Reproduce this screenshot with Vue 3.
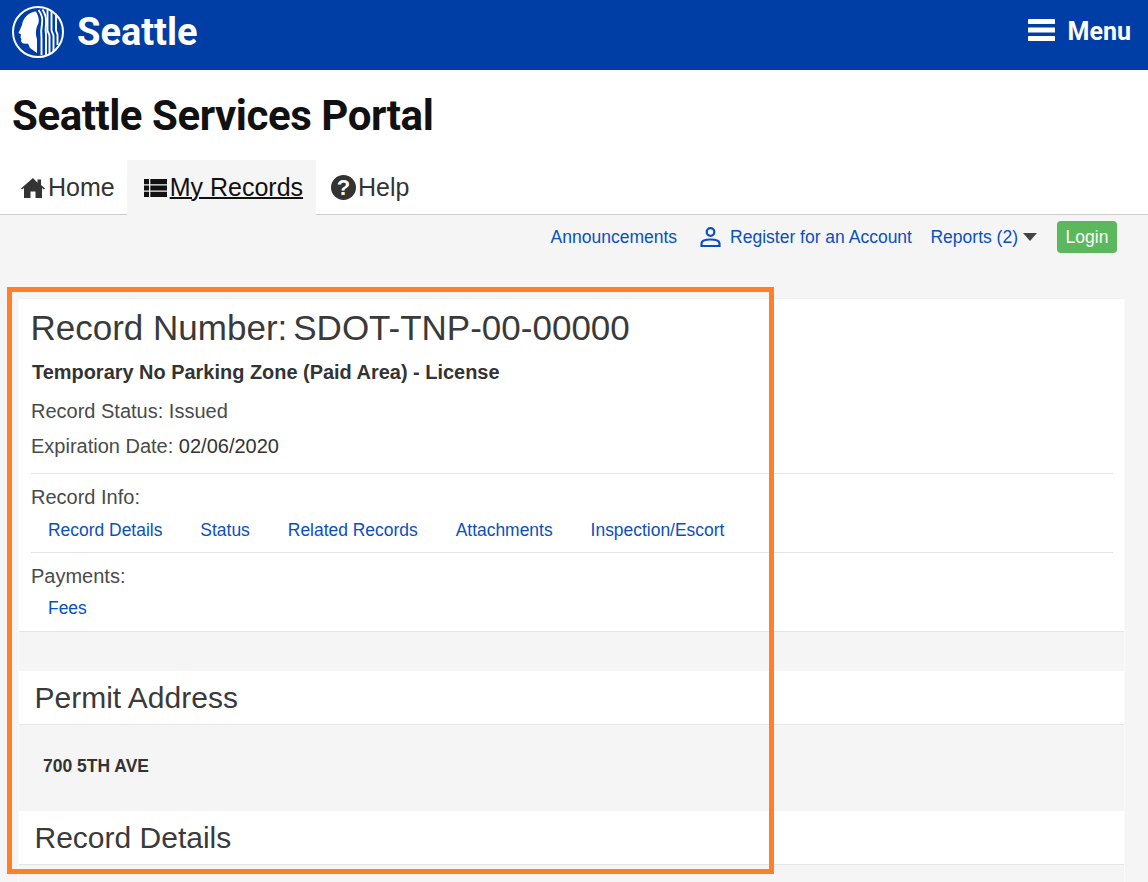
<template>
  <div class="page">
    <header class="topbar">
      <a class="brand">
        <svg class="seal" viewBox="0 0 52 52" width="52" height="52">
          <circle cx="26" cy="26" r="25" fill="none" stroke="#fff" stroke-width="2" />
          <path
            fill="#fff"
            d="M23 5.500C16 7 11 12 10 19L6.500 27l2.500 1.500-.5 3 1 1.500-.5 2c1 3 4 3 7 2.500l2 4.500 7 5V33c-2-6-1-11 1.500-16 1-4-.5-8-2.500-11.500z"
          />
          <g fill="none" stroke="#fff" stroke-width="1.900">
            <path d="M26.500 4c3 4 4.500 9 3.500 14-1 5-1 10-.5 14v17" />
            <path d="M30.500 3.500c2.500 4 4 9 3.500 14-.5 4-.5 8 0 12V49.500" />
            <path d="M35.500 3.500V24c0 2 2 4 2 6v18.500" />
            <path d="M39.500 5v19c0 2 2 4 2 6v16" />
            <path d="M44 9v15c0 2 1.500 3 1.500 5v10" />
          </g>
        </svg>
        <span class="brand-name">Seattle</span>
      </a>
      <a class="menu">
        <svg viewBox="0 0 27 22" width="27" height="22">
          <rect y="0" width="27" height="5" rx="0.500" fill="#fff" />
          <rect y="8.500" width="27" height="5" rx="0.500" fill="#fff" />
          <rect y="17" width="27" height="5" rx="0.500" fill="#fff" />
        </svg>
        <span>Menu</span>
      </a>
    </header>

    <h1 class="portal-title">Seattle Services Portal</h1>

    <nav class="tabs">
      <a class="tab home">
        <svg viewBox="0 0 24 20" width="24" height="20">
          <path fill="#333" d="M12 0 0 10.500l1 1 2-1.600V20h6.500v-6.500h5V20H21V9.900l2 1.600 1-1-4-3.500V1.500h-3.500v3.300z" />
        </svg>
        <span>Home</span>
      </a>
      <a class="tab active">
        <svg viewBox="0 0 23 18" width="23" height="18">
          <path fill="#111" d="M0 0h5v5.200H0zM6.300 0H23v5.200H6.300zM0 6.400h5v5.200H0zM6.300 6.400H23v5.200H6.300zM0 12.800h5V18H0zM6.300 12.800H23V18H6.300z" />
        </svg>
        <span class="underlined">My Records</span>
      </a>
      <a class="tab help">
        <svg viewBox="0 0 25 25" width="25" height="25">
          <circle cx="12.500" cy="12.500" r="12.500" fill="#333" />
          <text x="12.500" y="20" text-anchor="middle" class="qmark">?</text>
        </svg>
        <span>Help</span>
      </a>
    </nav>

    <main class="content">
      <div class="links">
        <a>Announcements</a>
        <a class="register">
          <svg viewBox="0 0 21 20" width="21" height="20">
            <circle cx="10.500" cy="5" r="3.800" fill="none" stroke="#0a4fc0" stroke-width="2.200" />
            <path fill="none" stroke="#0a4fc0" stroke-width="2.200" d="M1.500 19v-2.500c0-2.500 4-4 9-4s9 1.500 9 4V19z" />
          </svg>
          Register for an Account
        </a>
        <a class="reports">Reports (2)<i class="caret"></i></a>
        <button class="login">Login</button>
      </div>

      <div class="record-wrap">
        <section class="record-card">
          <div class="record-head">
            <h2><span>Record Number:</span><span>SDOT-TNP-00-00000</span></h2>
            <div class="record-type">Temporary No Parking Zone (Paid Area) - License</div>
            <div class="meta">Record Status: Issued</div>
            <div class="meta">Expiration Date: <span class="date">02/06/2020</span></div>
          </div>
          <div class="group">
            <div class="group-label">Record Info:</div>
            <div class="group-links">
              <a v-for="l in recordLinks" :key="l">{{ l }}</a>
            </div>
          </div>
          <div class="group last">
            <div class="group-label">Payments:</div>
            <div class="group-links"><a>Fees</a></div>
          </div>
        </section>

        <div class="spacer"></div>

        <h3 class="panel-title">Permit Address</h3>
        <div class="address">700 5TH AVE</div>
        <h3 class="panel-title">Record Details</h3>
      </div>
    </main>

    <div class="highlight"></div>
  </div>
</template>

<script setup>
const recordLinks = ["Record Details", "Status", "Related Records", "Attachments", "Inspection/Escort"];
</script>

<style>
html,
body {
  margin: 0;
  background: #f5f5f5;
}
</style>

<style scoped>
.page {
  position: relative;
  height: 882px;
  overflow: hidden;
  background: #f5f5f5;
  font-family: "Liberation Sans", Arial, sans-serif;
  color: #333;
}
.topbar {
  height: 70px;
  background: #003da5;
  display: flex;
  align-items: center;
  justify-content: space-between;
  padding: 0 17px 6px 12px;
  box-sizing: border-box;
  color: #fff;
}
.brand {
  display: flex;
  align-items: center;
  gap: 13px;
}
.brand-name {
  font-family: Roboto, sans-serif;
  font-weight: 700;
  font-size: 38px;
  line-height: 54px;
}
.menu {
  display: flex;
  align-items: center;
  gap: 13px;
  font-family: Roboto, sans-serif;
  font-weight: 700;
  font-size: 25px;
  line-height: 30px;
}
.menu svg {
  margin-top: -4px;
}
.portal-title {
  margin: 0;
  background: #fff;
  height: 90px;
  padding: 19px 12px 0;
  box-sizing: border-box;
  font-family: Roboto, sans-serif;
  font-weight: 700;
  font-size: 42px;
  letter-spacing: -0.450px;
  line-height: 54px;
  color: #111;
}
.tabs {
  display: flex;
  height: 55px;
  box-sizing: border-box;
  padding-left: 7px;
  background: #fff;
  border-bottom: 1px solid #ccc;
}
.tab {
  display: flex;
  align-items: center;
  gap: 3px;
  padding: 0 13px 0 14px;
  font-size: 25px;
  height: 55px;
  box-sizing: border-box;
}
.tab.home {
  padding-right: 12px;
}
.tab.active {
  background: #f5f5f5;
  color: #111;
  padding-left: 17px;
}
.tab.help {
  gap: 2px;
  padding-left: 15px;
}
.underlined {
  text-decoration: underline;
  text-decoration-thickness: 2px;
}
.qmark {
  font-family: "Liberation Sans", sans-serif;
  font-weight: 700;
  font-size: 22px;
  fill: #fff;
}
.links {
  display: flex;
  justify-content: flex-end;
  align-items: center;
  height: 44px;
  padding-right: 31px;
  font-size: 17.500px;
  color: #0a4fc0;
}
.register {
  display: flex;
  align-items: center;
  gap: 9px;
  margin-left: 23px;
}
.reports {
  margin-left: 18.500px;
  display: flex;
  align-items: center;
}
.caret {
  display: inline-block;
  margin-left: 5px;
  border-left: 7.500px solid transparent;
  border-right: 7.500px solid transparent;
  border-top: 8px solid #444;
}
.login {
  margin-left: 20px;
  width: 60px;
  height: 32px;
  padding: 0;
  border: 0;
  border-radius: 4px;
  background: #5cb85c;
  color: #fff;
  font: 17.500px "Liberation Sans", Arial, sans-serif;
}
.record-wrap {
  margin: 40px 23px 0 18px;
  padding-bottom: 40px;
  border-left: 1px solid #fafafa;
  border-right: 1px solid #fafafa;
}
.record-card {
  background: #fff;
  padding: 0 11px 0 12px;
  border-bottom: 1px solid #e5e5e5;
  box-shadow: 0 -1px 0 #f2f2f2;
  height: 333px;
  box-sizing: border-box;
}
.record-head {
  height: 174px;
  border-bottom: 1px solid #e5e5e5;
}
.record-head h2 {
  margin: 0 0 0 -0.500px;
  padding-top: 8px;
  font-weight: 400;
  font-size: 35px;
  line-height: 42px;
  display: flex;
  gap: 6px;
  color: #3a3a3a;
}
.record-type {
  margin-top: 11px;
  font-size: 19.950px;
  font-weight: 700;
  line-height: 24px;
  padding-left: 1px;
}
.meta {
  font-size: 20px;
  line-height: 24px;
  margin-top: 15px;
  color: #4a4a4a;
}
.meta + .meta {
  margin-top: 11px;
}
.date {
  color: #333;
}
.group {
  height: 79px;
  border-bottom: 1px solid #e5e5e5;
  box-sizing: border-box;
  padding-top: 11px;
  font-size: 20px;
  line-height: 24px;
  color: #4a4a4a;
}
.group.last {
  border-bottom: 0;
}
.group-links {
  display: flex;
  gap: 38px;
  padding-left: 17px;
  margin-top: 9px;
  font-size: 17.450px;
  line-height: 24px;
  color: #0a4fc0;
}
.group.last .group-links {
  margin-top: 8px;
}
.spacer {
  height: 39px;
}
.panel-title {
  margin: 0;
  background: #fff;
  height: 54px;
  padding-left: 15.500px;
  box-sizing: border-box;
  font-weight: 400;
  font-size: 30px;
  line-height: 54px;
  border-bottom: 1px solid #e5e5e5;
  color: #3a3a3a;
}
.address {
  margin-left: 24px;
  height: 86px;
  line-height: 82px;
  font-size: 17.500px;
  font-weight: 700;
}
.highlight {
  position: absolute;
  left: 7px;
  top: 287px;
  width: 767px;
  height: 587px;
  box-sizing: border-box;
  border: 5px solid #ff7f2a;
  pointer-events: none;
}
</style>
